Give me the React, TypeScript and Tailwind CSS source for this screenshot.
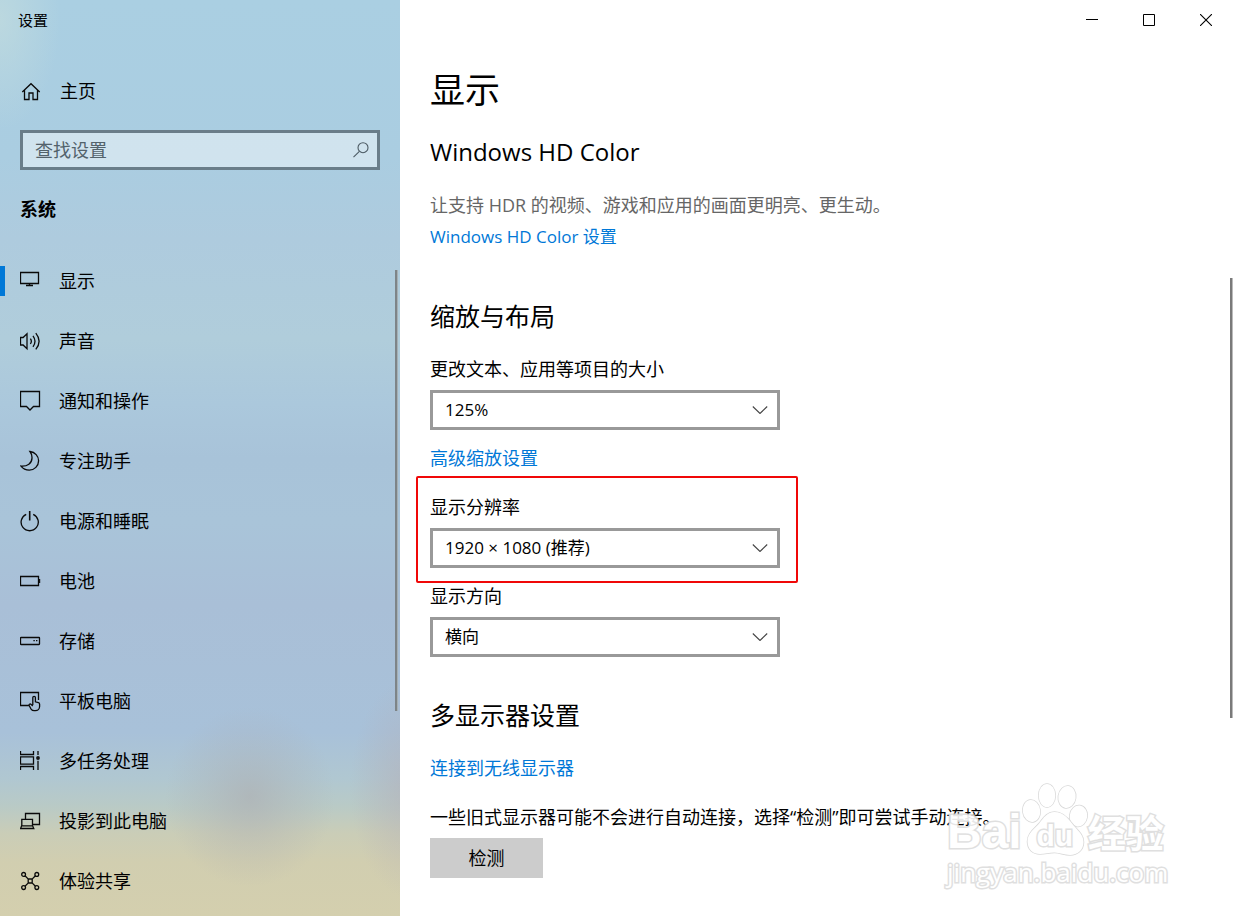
import type { ReactNode } from "react";

function Icon({ children }: { children: ReactNode }) {
  return (
    <svg
      className="h-[22px] w-[22px] shrink-0"
      viewBox="0 0 22 22"
      fill="none"
      stroke="#0a0a0a"
      strokeWidth="1.3"
      aria-hidden="true"
    >
      {children}
    </svg>
  );
}

const navItems: { label: string; icon: ReactNode }[] = [
  { label: "显示", icon: <path d="M.5 2.5h18v11H.5zM9.5 13.5v2M6 15.5h7" /> },
  {
    label: "声音",
    icon: (
      <path d="M.5 7.5h2.6L7 3.8v15l-3.9-3.8H.5zM10.4 8.6q1.9 2.7 0 5.4M13 5.8q4 5.5 0 11M15.8 3.2q6.6 8.1 0 16.2" />
    ),
  },
  { label: "通知和操作", icon: <path d="M.5 1.5h19v15h-6L10 20l-3.5-3.5h-6z" /> },
  {
    label: "专注助手",
    icon: (
      <path d="M10 1.5c5 .6 8.6 4.6 8.6 9.3a9.3 9.3 0 0 1-9.3 9.3c-3.5 0-6.5-1.6-8.3-4 6.5.5 10.8-3 11-8 .1-2.4-.6-4.7-2-6.6z" />
    ),
  },
  {
    label: "电源和睡眠",
    icon: (
      <>
        <path d="M6.2 4.3a8.6 8.6 0 1 0 7 0" />
        <path d="M9.7 1v9.5" strokeWidth="1.6" />
      </>
    ),
  },
  {
    label: "电池",
    icon: (
      <>
        <path d="M.5 6.5h18v9H.5z" />
        <path d="M19 9h1.2v4H19z" fill="#111" stroke="none" />
      </>
    ),
  },
  {
    label: "存储",
    icon: (
      <>
        <rect x=".5" y="7.5" width="19" height="7" rx=".5" />
        <path d="M13.4 10.6h1.4M16 10.6h1.4" />
      </>
    ),
  },
  {
    label: "平板电脑",
    icon: (
      <path d="M8.8 15.5H.5v-13h18v7.6M12.8 15V7.6a1.3 1.3 0 0 1 2.6 0v4.2l3 .8q1.2.4 1.2 1.6v2.3a4.2 4.2 0 0 1-4.2 4.2h-1.2q-2 0-3.1-1.6L9 15.2q.1-1.5 1.7-1.1l2.1 1.8" />
    ),
  },
  {
    label: "多任务处理",
    icon: (
      <>
        <path d="M.5 1v3.5h13V1M.5 20v-3.5h13V20M.5 6.8h13v7.4H.5zM18 1v4M18 10.8V20" />
        <circle cx="18" cy="8" r="1.9" fill="#111" stroke="none" />
      </>
    ),
  },
  {
    label: "投影到此电脑",
    icon: (
      <path d="M5.5 9V3.5h14v11h-7M1.8 15.5V9.3h10.7v6.2M1.6 15.8h11l1.2 2.7H.6z" />
    ),
  },
  {
    label: "体验共享",
    icon: (
      <>
        <circle cx="3.6" cy="4.4" r="1.9" />
        <circle cx="16.8" cy="4.4" r="1.9" />
        <circle cx="3.6" cy="17.6" r="1.9" />
        <circle cx="16.8" cy="17.6" r="1.9" />
        <path d="m5 5.8 3.3 3.3M15.4 5.8l-3.3 3.3M5 16.2l3.3-3.3M15.4 16.2l-3.3-3.3M8.2 9h4v4h-4z" />
      </>
    ),
  },
];

function Sidebar() {
  return (
    <aside className="relative flex w-[400px] shrink-0 flex-col overflow-hidden bg-[linear-gradient(180deg,#aacfe2_0%,#aacde1_17%,#aecbde_26%,#b0cddb_37%,#abc8dc_44%,#a8c3d9_50%,#a9c4d9_57%,#a9bfd7_66%,#a8c1d9_80%,#b0c7d1_85%,#b9cac6_88%,#cacdb7_91%,#d1ceb0_94%,#d4cfae_100%)]">
      <div className="absolute inset-0 bg-[radial-gradient(ellipse_85px_90px_at_250px_87%,rgba(172,174,178,0.65),rgba(172,174,178,0.3)_50%,rgba(172,174,178,0)),radial-gradient(ellipse_60px_110px_at_410px_86%,rgba(180,174,182,0.6),rgba(180,174,182,0)),radial-gradient(ellipse_60px_110px_at_0px_20px,rgba(195,220,222,0.7),rgba(195,220,222,0))]" />
      <div className="relative flex flex-1 flex-col">
        <div className="flex h-10 items-center pl-[18px] text-[15px]">设置</div>
        <a href="#home" className="mt-[21px] flex h-[60px] items-center gap-[18px] pl-5">
          <Icon>
            <path d="M2.3 12 11 3.7l8.7 8.3M4.5 10v9.5H9V13h4v6.5h4.5V10" />
          </Icon>
          主页
        </a>
        <div className="mx-5 mt-[9px] flex h-10 items-center border-[3px] border-[#6a7d89] bg-white/45 pr-2">
          <input
            type="search"
            aria-label="查找设置"
            placeholder="查找设置"
            className="h-full min-w-0 flex-1 bg-transparent pl-3 outline-none placeholder:text-[#53626b]"
          />
          <svg
            className="h-4 w-4"
            viewBox="0 0 16 16"
            fill="none"
            stroke="#4c5a63"
            strokeWidth="1.1"
            aria-hidden="true"
          >
            <circle cx="10" cy="5.7" r="5" />
            <path d="M6.4 9.3.5 15.2" />
          </svg>
        </div>
        <h2 className="mt-[27px] pl-5 leading-6 font-bold">系统</h2>
        <div className="mt-[30px] flex">
          <nav className="min-w-0 flex-1">
            <ul>
              {navItems.map((item, i) => (
                <li key={item.label}>
                  <a
                    href={"#" + item.label}
                    aria-current={i === 0 ? "page" : undefined}
                    className="flex h-[60px] items-center"
                  >
                    <span className={i === 0 ? "h-[30px] w-[5px] bg-[#0078d7]" : "h-[30px] w-[5px]"} />
                    <span className="flex items-center gap-[17px] pl-[15px]">
                      <Icon>{item.icon}</Icon>
                      {item.label}
                    </span>
                  </a>
                </li>
              ))}
            </ul>
          </nav>
          <div className="mt-[19px] mr-[2px] h-[441px] w-[3px] border-r border-[#a5b0b5] bg-[#7d8488]" />
        </div>
      </div>
    </aside>
  );
}

function SelectField({ id, label, options }: { id: string; label: string; options: string[] }) {
  return (
    <div className="w-[350px] max-w-full">
      <label htmlFor={id} className="block leading-6">
        {label}
      </label>
      <div className="relative mt-[9px]">
        <select
          id={id}
          className="block h-10 w-full appearance-none border-[3px] border-[#999] bg-white pr-10 pl-3 text-[17px] text-black outline-none"
        >
          {options.map((o) => (
            <option key={o}>{o}</option>
          ))}
        </select>
        <svg
          className="pointer-events-none absolute top-4 right-3 h-2 w-4"
          viewBox="0 0 16 8"
          fill="none"
          stroke="#444"
          strokeWidth="1.1"
          aria-hidden="true"
        >
          <path d="M.8.5 8 7.5 15.2.5" />
        </svg>
      </div>
    </div>
  );
}

function WindowControls() {
  const cell = "flex h-10 w-[57px] items-center justify-center";
  return (
    <div className="flex justify-end pr-px">
      <button type="button" aria-label="最小化" className={cell}>
        <svg className="h-3 w-3" viewBox="0 0 12 12" fill="none" stroke="#000">
          <path d="M0 5.5h12" />
        </svg>
      </button>
      <button type="button" aria-label="最大化" className={cell}>
        <svg className="h-3 w-3" viewBox="0 0 12 12" fill="none" stroke="#000">
          <path d="M.5.5h11v11H.5z" />
        </svg>
      </button>
      <button type="button" aria-label="关闭" className={cell}>
        <svg className="h-3 w-3" viewBox="0 0 12 12" fill="none" stroke="#000" strokeWidth="1.1">
          <path d="m0 0 12 12M12 0 0 12" />
        </svg>
      </button>
    </div>
  );
}

function Watermark() {
  const outline = "text-white [-webkit-text-stroke:3px_#dcdcdc] [paint-order:stroke_fill]";
  return (
    <div className="pointer-events-none absolute right-[66px] bottom-[26px] w-[222px] opacity-90">
      <div className={"flex items-end font-bold " + outline}>
        <span className="font-['Liberation_Sans',sans-serif] text-[48px] leading-[52px]">Bai</span>
        <span className="relative flex h-[78px] w-[66px] shrink-0 items-end justify-center">
          <svg
            className="absolute inset-0 h-full w-full"
            viewBox="0 0 66 78"
            fill="#fff"
            stroke="#d4d4d4"
            strokeWidth="1.5"
            aria-hidden="true"
          >
            <ellipse cx="9.500" cy="31" rx="8.700" ry="11" transform="rotate(-8 9.500 31)" />
            <ellipse cx="25" cy="15.500" rx="8.300" ry="11.500" />
            <ellipse cx="45" cy="17" rx="8.700" ry="11" transform="rotate(8 45 17)" />
            <ellipse cx="56.500" cy="36" rx="8.700" ry="10.500" transform="rotate(8 56.500 36)" />
            <path d="M32.500 32c-7.500 0-11 6-15 11C12.500 49 5.500 53 5.500 61.500 5.500 69.500 11 74 18 74c5 0 9-1.500 14.500-1.500S42 75 48 75c7.500 0 13.500-5 13.500-13 0-8-7-12.500-11.500-18.500C46 38 41 32 32.500 32z" />
          </svg>
          <span className="relative pb-1 font-['Liberation_Sans',sans-serif] text-[30px] leading-9">du</span>
        </span>
        <span className="text-[38px] leading-[52px]">经验</span>
      </div>
      <div className={"-mt-1 font-['Open_Sans',sans-serif] text-[26px] leading-9 " + outline}>
        jingyan.baidu.com
      </div>
    </div>
  );
}

export default function App() {
  const heading = "text-[25px] leading-8";
  const link = "block w-fit leading-6 text-[#0078d7]";
  return (
    <div className="relative flex min-h-screen bg-white font-['Open_Sans','Noto_Sans_CJK_SC',sans-serif] text-[18px] text-black">
      <Sidebar />
      <div className="relative flex min-w-0 flex-1 flex-col">
        <WindowControls />
        <div className="flex flex-1">
          <main className="min-w-0 flex-1 pb-9 pl-[30px]">
            <h1 className="mt-[26px] text-[35px] leading-[48px]">显示</h1>
            <h2 className="mt-[22px] text-[24px] leading-8">Windows HD Color</h2>
            <p className="mt-[25px] leading-6 text-[#666]">让支持 HDR 的视频、游戏和应用的画面更明亮、更生动。</p>
            <a href="#hd-color" className={"mt-2 text-[17px] " + link}>
              Windows HD Color 设置
            </a>

            <h2 className={"mt-[51px] mb-[25px] " + heading}>缩放与布局</h2>
            <SelectField
              id="scale"
              label="更改文本、应用等项目的大小"
              options={["125%", "100%", "150%", "175%"]}
            />
            <a href="#advanced-scaling" className={"mt-4 " + link}>
              高级缩放设置
            </a>
            <div className="mt-[6px] -ml-[14px] w-fit rounded-[2px] border-2 border-[#f00808] pt-[17px] pr-4 pb-[13px] pl-3">
              <div className="w-[350px]">
                <SelectField
                  id="resolution"
                  label="显示分辨率"
                  options={["1920 × 1080 (推荐)", "1680 × 1050", "1600 × 900"]}
                />
              </div>
            </div>
            <div className="mt-px">
              <SelectField id="orientation" label="显示方向" options={["横向", "纵向"]} />
            </div>

            <h2 className={"mt-[42px] " + heading}>多显示器设置</h2>
            <a href="#wireless" className={"mt-[25px] " + link}>
              连接到无线显示器
            </a>
            <p className="mt-[25px] leading-6">
              一些旧式显示器可能不会进行自动连接，选择“检测”即可尝试手动连接。
            </p>
            <button type="button" className="mt-[9px] h-10 w-[113px] bg-[#ccc]">
              检测
            </button>
          </main>
          <div className="mt-[238px] mr-[2px] h-[440px] w-[3px] border-r border-[#bbb] bg-[#7a7a7a]" />
        </div>
        <Watermark />
      </div>
    </div>
  );
}
